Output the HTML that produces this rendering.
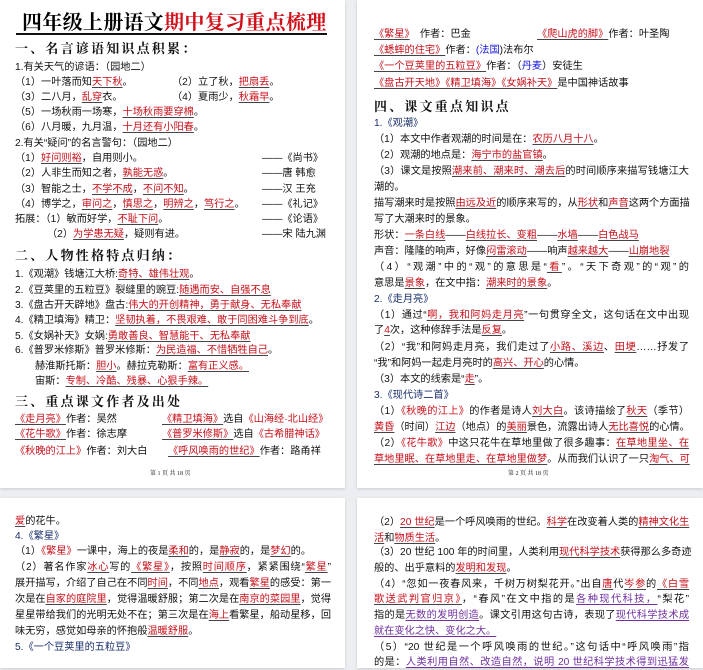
<!DOCTYPE html>
<html><head><meta charset="utf-8"><style>
body{margin:0;width:703px;height:662px;background:#eceef2;position:relative;overflow:hidden;font-family:"Liberation Serif","Noto Serif CJK SC",serif;}
.pg{position:absolute;background:#fff;box-shadow:0 1px 3px rgba(0,0,0,.15);}
.l{position:absolute;white-space:nowrap;font-size:10.2px;line-height:14px;color:#111;font-family:"Liberation Sans","Noto Sans CJK SC",sans-serif;}
.j{text-align:justify;text-align-last:justify;}
.jr{width:315px;}
.jl{width:316px;}
.r{color:#c8101a;text-decoration:underline;text-decoration-color:#444;text-underline-offset:2px;text-decoration-thickness:1.3px;}
.rn{color:#c8101a;}
.b{color:#1a2f6b;}
.bl{color:#1515e0;}
.p{color:#7030a0;text-decoration:underline;text-underline-offset:2px;}
.h{position:absolute;white-space:nowrap;font-size:13px;font-weight:bold;letter-spacing:2.2px;color:#111;font-family:"Noto Serif CJK SC",serif;line-height:16px;}
.f{position:absolute;font-size:6px;color:#222;white-space:nowrap;}
</style></head><body>
<div class="pg" style="left:0;top:0;width:345px;height:488px"></div>
<div class="pg" style="left:357px;top:0;width:346px;height:488px"></div>
<div class="pg" style="left:0;top:498px;width:345px;height:170px"></div>
<div class="pg" style="left:357px;top:498px;width:346px;height:170px"></div>

<!-- page 1 -->
<div style="position:absolute;left:22px;top:8px;font-size:20px;line-height:26px;font-weight:bold;white-space:nowrap;font-family:'Noto Serif CJK SC',serif;letter-spacing:0.3px">四年级上册语文<span style="color:#d0101a">期中复习重点梳理</span></div>
<div style="position:absolute;left:16px;top:33px;width:311px;height:1.5px;background:#111"></div>
<div class="h" style="left:15px;top:40px">一、名言谚语知识点积累：</div>
<div class="l" style="left:15px;top:61px">1.有关天气的谚语：（园地二）</div>
<div class="l" style="left:15px;top:76px">（1）一叶落而知<span class="r">天下秋</span>。</div>
<div class="l" style="left:172px;top:76px">（2）立了秋，<span class="r">把扇丢</span>。</div>
<div class="l" style="left:15px;top:91px">（3）二八月，<span class="r">乱穿</span>衣。</div>
<div class="l" style="left:172px;top:91px">（4）夏雨少，<span class="r">秋霜早</span>。</div>
<div class="l" style="left:15px;top:106px">（5）一场秋雨一场寒，<span class="r">十场秋雨要穿棉</span>。</div>
<div class="l" style="left:15px;top:121px">（6）八月暖，九月温，<span class="r">十月还有小阳春</span>。</div>
<div class="l" style="left:15px;top:137px">2.有关“疑问”的名言警句：（园地二）</div>
<div class="l" style="left:15px;top:152px">（1）<span class="r">好问则裕</span>，自用则小。</div>
<div class="l" style="left:262px;top:152px">——《尚书》</div>
<div class="l" style="left:15px;top:167px">（2）人非生而知之者，<span class="r">孰能无惑</span>。</div>
<div class="l" style="left:262px;top:167px">——唐 韩愈</div>
<div class="l" style="left:15px;top:183px">（3）智能之士，<span class="r">不学不成</span>，<span class="r">不问不知</span>。</div>
<div class="l" style="left:262px;top:183px">——汉 王充</div>
<div class="l" style="left:15px;top:198px">（4）博学之，<span class="r">审问之</span>，<span class="r">慎思之</span>，<span class="r">明辨之</span>，<span class="r">笃行之</span>。</div>
<div class="l" style="left:262px;top:198px">——《礼记》</div>
<div class="l" style="left:15px;top:213px">拓展：（1）敏而好学，<span class="r">不耻下问</span>。</div>
<div class="l" style="left:262px;top:213px">——《论语》</div>
<div class="l" style="left:47px;top:228px">（2）<span class="r">为学患无疑</span>，疑则有进。</div>
<div class="l" style="left:262px;top:228px">——宋 陆九渊</div>
<div class="h" style="left:15px;top:247px">二、人物性格特点归纳：</div>
<div class="l" style="left:15px;top:268px">1.《观潮》钱塘江大桥:<span class="r">奇特、雄伟壮观</span>。</div>
<div class="l" style="left:15px;top:284px">2.《豆荚里的五粒豆》裂缝里的豌豆:<span class="r">随遇而安、自强不息</span></div>
<div class="l" style="left:15px;top:299px">3.《盘古开天辟地》盘古:<span class="r">伟大的开创精神，勇于献身、无私奉献</span></div>
<div class="l" style="left:15px;top:314px">4.《精卫填海》精卫：<span class="r">坚韧执着，不畏艰难、敢于同困难斗争到底</span>。</div>
<div class="l" style="left:15px;top:330px">5.《女娲补天》女娲:<span class="r">勇敢善良、智慧能干、无私奉献</span></div>
<div class="l" style="left:15px;top:344px">6.《普罗米修斯》普罗米修斯：<span class="r">为民造福、不惜牺牲自己</span>。</div>
<div class="l" style="left:35px;top:360px">赫淮斯托斯：<span class="r">胆小</span>。赫拉克勒斯：<span class="r">富有正义感。</span></div>
<div class="l" style="left:35px;top:375px">宙斯：<span class="r">专制、冷酷、残暴、心狠手辣。</span></div>
<div class="h" style="left:15px;top:393px">三、重点课文作者及出处</div>
<div class="l" style="left:15px;top:413px"><span class="r">《走月亮》</span>作者：吴然</div>
<div class="l" style="left:162px;top:413px"><span class="r">《精卫填海》</span>选自<span class="rn">《山海经·北山经》</span></div>
<div class="l" style="left:15px;top:428px"><span class="r">《花牛歌》</span>作者：徐志摩</div>
<div class="l" style="left:162px;top:428px"><span class="r">《普罗米修斯》</span>选自<span class="rn">《古希腊神话》</span></div>
<div class="l" style="left:15px;top:445px"><span class="rn">《秋晚的江上》</span>作者：刘大白</div>
<div class="l" style="left:168px;top:445px"><span class="r">《呼风唤雨的世纪》</span>作者：路甬祥</div>
<div class="f" style="left:150px;top:468px">第 1 页 共 18 页</div>

<!-- page 2 -->
<div class="l" style="left:374px;top:28px"><span class="r">《繁星》</span>　作者：巴金</div>
<div class="l" style="left:537px;top:28px"><span class="r">《爬山虎的脚》</span>作者：叶圣陶</div>
<div class="l" style="left:374px;top:44px"><span class="r">《蟋蟀的住宅》</span>作者：<span class="bl">(法国</span>)法布尔</div>
<div class="l" style="left:374px;top:60px"><span class="r">《一个豆荚里的五粒豆》</span>作者：（<span class="bl">丹麦</span>）安徒生</div>
<div class="l" style="left:374px;top:77px"><span class="r">《盘古开天地》《精卫填海》《女娲补天》</span>是中国神话故事</div>
<div class="h" style="left:374px;top:98px">四、课文重点知识点</div>
<div class="l b" style="left:374px;top:117px">1.《观潮》</div>
<div class="l" style="left:374px;top:133px">（1）本文中作者观潮的时间是在：<span class="r">农历八月十八</span>。</div>
<div class="l" style="left:374px;top:149px">（2）观潮的地点是：<span class="r">海宁市的盐官镇</span>。</div>
<div class="l j jr" style="left:374px;top:165px">（3）课文是按照<span class="r">潮来前、潮来时、潮去后</span>的时间顺序来描写钱塘江大</div>
<div class="l" style="left:374px;top:181px">潮的。</div>
<div class="l j jr" style="left:374px;top:197px">描写潮来时是按照<span class="r">由远及近</span>的顺序来写的，从<span class="r">形状</span>和<span class="r">声音</span>这两个方面描</div>
<div class="l" style="left:374px;top:213px">写了大潮来时的景象。</div>
<div class="l" style="left:374px;top:229px">形状：<span class="r">一条白线</span>——<span class="r">白线拉长、变粗</span>——<span class="r">水墙</span>——<span class="r">白色战马</span></div>
<div class="l" style="left:374px;top:245px">声音：隆隆的响声，好像<span class="r">闷雷滚动</span>——响声<span class="r">越来越大</span>——<span class="r">山崩地裂</span></div>
<div class="l j jr" style="left:374px;top:261px">（4）“观潮”中的“观”的意思是“<span class="r">看</span>”。“天下奇观”的“观”的</div>
<div class="l" style="left:374px;top:277px">意思是<span class="r">景象</span>，在文中指：<span class="r">潮来时的景象</span>。</div>
<div class="l b" style="left:374px;top:293px">2.《走月亮》</div>
<div class="l j jr" style="left:374px;top:309px">（1）通过“<span class="r">啊，我和阿妈走月亮</span>”一句贯穿全文，这句话在文中出现</div>
<div class="l" style="left:374px;top:324px">了<span class="r">4</span>次，这种修辞手法是<span class="r">反复</span>。</div>
<div class="l j jr" style="left:374px;top:341px">（2）“我”和阿妈走月亮，我们走过了<span class="r">小路、溪边</span>、<span class="r">田埂</span>……抒发了</div>
<div class="l" style="left:374px;top:357px">“我”和阿妈一起走月亮时的<span class="r">高兴、开心</span>的心情。</div>
<div class="l" style="left:374px;top:373px">（3）本文的线索是“<span class="r">走</span>”。</div>
<div class="l b" style="left:374px;top:389px">3.《现代诗二首》</div>
<div class="l j jr" style="left:374px;top:405px">（1）<span class="rn">《秋晚的江上》</span>的作者是诗人<span class="r">刘大白</span>。该诗描绘了<span class="r">秋天</span>（季节）</div>
<div class="l j jr" style="left:374px;top:421px"><span class="r">黄昏</span>（时间）<span class="r">江边</span>（地点）的<span class="r">美丽</span>景色，流露出诗人<span class="r">无比喜悦</span>的心情。</div>
<div class="l j jr" style="left:374px;top:437px">（2）<span class="rn">《花牛歌》</span>中这只花牛在草地里做了很多趣事：<span class="r">在草地里坐、在</span></div>
<div class="l j jr" style="left:374px;top:453px"><span class="r">草地里眠、在草地里走、在草地里做梦</span>。从而我们认识了一只<span class="r">淘气、可</span></div>
<div class="f" style="left:508px;top:468px">第 2 页 共 18 页</div>

<!-- page 3 -->
<div class="l" style="left:15px;top:515px"><span class="r">爱</span>的花牛。</div>
<div class="l b" style="left:15px;top:530px">4.《繁星》</div>
<div class="l" style="left:15px;top:545px">（1）<span class="rn">《繁星》</span>一课中，海上的夜是<span class="r">柔和</span>的，是<span class="r">静寂</span>的，是<span class="r">梦幻</span>的。</div>
<div class="l j jl" style="left:15px;top:561px">（2）著名作家<span class="r">冰心</span>写的<span class="r">《繁星》</span>，按照<span class="r">时间顺序</span>，紧紧围绕“<span class="r">繁星</span>”</div>
<div class="l j jl" style="left:15px;top:577px">展开描写，介绍了自己在不同<span class="r">时间</span>，不同<span class="r">地点</span>，观看<span class="r">繁星</span>的感受：第一</div>
<div class="l j jl" style="left:15px;top:593px">次是在<span class="r">自家的庭院里</span>，觉得温暖舒服；第二次是在<span class="r">南京的菜园里</span>，觉得</div>
<div class="l j jl" style="left:15px;top:609px">星星带给我们的光明无处不在；第三次是在<span class="r">海上</span>看繁星，船动星移，回</div>
<div class="l" style="left:15px;top:625px">味无穷，感觉如母亲的怀抱般<span class="r">温暖舒服</span>。</div>
<div class="l b" style="left:15px;top:641px">5.《一个豆荚里的五粒豆》</div>

<!-- page 4 -->
<div class="l j jr" style="left:374px;top:516px">（2）<span class="r">20 世纪</span>是一个呼风唤雨的世纪。<span class="r">科学</span>在改变着人类的<span class="r">精神文化生</span></div>
<div class="l" style="left:374px;top:532px"><span class="r">活</span>和<span class="r">物质生活</span>。</div>
<div class="l j jr" style="left:374px;top:546px">（3）20 世纪 100 年的时间里，人类利用<span class="r">现代科学技术</span>获得那么多奇迹</div>
<div class="l" style="left:374px;top:562px">般的、出乎意料的<span class="r">发明和发现</span>。</div>
<div class="l j jr" style="left:374px;top:578px">（4）“忽如一夜春风来，千树万树梨花开。”出自<span class="r">唐</span>代<span class="r">岑参</span>的<span class="r">《白雪</span></div>
<div class="l j jr" style="left:374px;top:593px"><span class="r">歌送武判官归京》</span>，“春风”在文中指的是<span class="p">各种现代科技，</span>“梨花”</div>
<div class="l j jr" style="left:374px;top:609px">指的是<span class="p">无数的发明创造</span>。课文引用这句古诗，表现了<span class="p">现代科学技术成</span></div>
<div class="l" style="left:374px;top:625px"><span class="p">就在变化之快、变化之大。</span></div>
<div class="l j jr" style="left:374px;top:641px">（5）“20 世纪是一个呼风唤雨的世纪。”这句话中“呼风唤雨”指</div>
<div class="l j jr" style="left:374px;top:656px">的是：<span class="p">人类利用自然、改造自然，说明 20 世纪科学技术得到迅猛发</span></div>
</body></html>
